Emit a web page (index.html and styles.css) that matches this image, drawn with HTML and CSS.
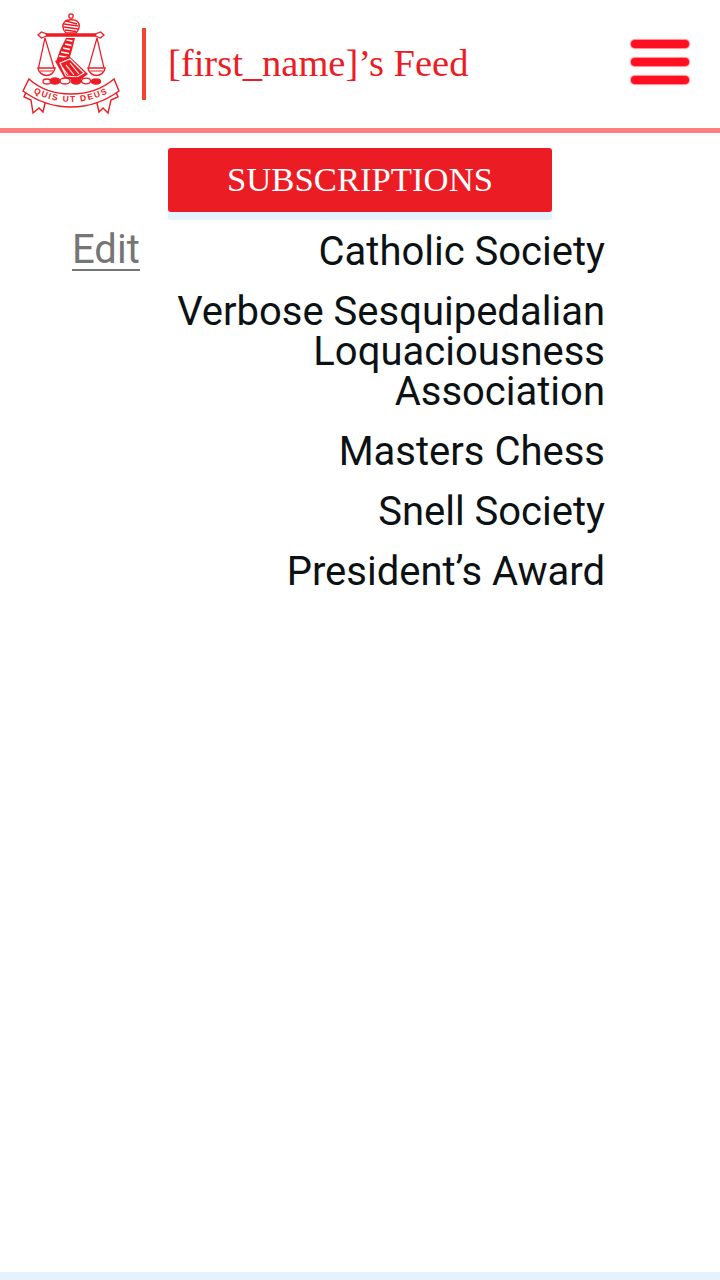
FILE: index.html
```html
<!DOCTYPE html>
<html lang="en">
<head>
<meta charset="utf-8">
<title>Feed</title>
<link rel="stylesheet" href="styles.css">
</head>
<body>
<div class="page">
  <header class="header">
    <svg class="logo" viewBox="22 13 99 102" width="99" height="102" aria-label="Crest">
      <g class="crest-line">
        <circle cx="71" cy="16" r="2.200" stroke-width="1.300"/>
        <path d="M66 33C62 29 62 24 65 21.500 67 19.500 75 19 77.500 21.500 80 24 80 29 76 33z" stroke-width="1.400"/>
        <path d="M64 24l14 2M63.500 27l15 2M66 21l11 3M65 30l11 1.500" stroke-width="1.300"/>
        <path d="M43 35H99" stroke-width="3.400"/>
        <path d="M38 35l3.500-3 4 1.500 1.500 1.500-1.500 1.500-4 1.500zM104 35l-3.500-3-4 1.500-1.500 1.500 1.500 1.500 4 1.500z" stroke-width="1.300"/>
        <path d="M45 38L38.500 68M45 38L54 68M97 38L88.500 68M97 38L104 68" stroke-width="1.200"/>
      </g>
      <g class="crest-line">
        <path d="M38 68H55C54.500 73 50 75.500 46.500 75.500S38.500 73 38 68zM88 68H105C104.500 73 100 75.500 96.500 75.500S88.500 73 88 68z" stroke-width="1.500"/>
        <path d="M40 71H53M90 71H103" stroke-width="1"/>
      </g>
      <path class="crest-fill" d="M66 38H75L72 50 69 60 56 62 60 50z"/>
      <path class="crest-white" d="M66.500 40l6 1M65 44l6.500 1.500M63 48l7 1.500M61 52l8 1.500M59 56l9 1.500" stroke-width="1.300"/>
      <path class="crest-fill" d="M55 61L69 56 88 74 80 80 65 79z"/>
      <path class="crest-white" d="M60 63L70 59 84 73 77 77 66 76zM70 63l9 11M66 65l8 10M62 67l6 8" stroke-width="1.100"/>
      <g class="coins">
        <ellipse cx="47" cy="81.500" rx="4" ry="2.500"/>
        <ellipse class="coin-solid" cx="55" cy="81" rx="5" ry="3"/>
        <ellipse cx="65" cy="81" rx="5" ry="3"/>
        <ellipse class="coin-solid" cx="76" cy="81" rx="5" ry="3"/>
        <ellipse cx="86" cy="81" rx="4.500" ry="2.800"/>
        <ellipse class="coin-solid" cx="96" cy="81.500" rx="4.500" ry="2.500"/>
      </g>
      <g class="ribbon">
        <path d="M29 85L24 97 31 100 33 113 39 108 43 112 46 99z"/>
        <path d="M113 85L118 97 111 100 108 113 103 108 99 112 96 99z"/>
        <path d="M29 79C41 90 55 94 71 94S101 90 114 79L119 91C104 102 86 107 71 107S38 102 23 91z"/>
      </g>
      <path id="motto-path" class="motto-path" d="M32 92Q71 112 110 92"/>
      <text class="motto"><textPath href="#motto-path" startOffset="50%" text-anchor="middle">QUIS UT DEUS</textPath></text>
    </svg>
    <span class="divider"></span>
    <h1 class="title">[first_name]’s Feed</h1>
    <div class="menu" aria-label="Menu"><i></i><i></i><i></i></div>
  </header>
  <main class="main">
    <h2 class="banner">SUBSCRIPTIONS</h2>
    <div class="content">
      <a class="edit" href="#">Edit</a>
      <ul class="subs">
        <li>Catholic Society</li>
        <li>Verbose Sesquipedalian Loquaciousness Association</li>
        <li>Masters Chess</li>
        <li>Snell Society</li>
        <li>President’s Award</li>
      </ul>
    </div>
  </main>
  <footer class="footer"></footer>
</div>
</body>
</html>
```
FILE: styles.css
```css
* { box-sizing: border-box; }
html, body { margin: 0; padding: 0; background: #fff; }
.page { display: flex; flex-direction: column; height: 1280px; font-family: Roboto, sans-serif; }
.header { display: flex; align-items: center; height: 133px; padding: 0 31px 0 22px; border-bottom: 5px solid #ff8080; }
.logo { flex: none; display: block; }
.crest-line { fill: #fff; stroke: #ed1c24; }
.crest-fill { fill: #ed1c24; }
.crest-white { fill: none; stroke: #fff; }
.coins ellipse { fill: #fff; stroke: #ed1c24; stroke-width: 1.300; }
.coins .coin-solid { fill: #ed1c24; }
.ribbon path { fill: #fff; stroke: #ed1c24; stroke-width: 1.400; }
.motto-path { fill: none; }
.motto { font: 700 8.500px "Liberation Sans", sans-serif; letter-spacing: 1.500px; fill: #ed1c24; }
.divider { flex: none; width: 4px; height: 72px; margin-left: 21px; background: #f44336; }
.title { flex: 1; margin: 0 0 2px 22px; font: 400 38.500px/1 "Liberation Serif", serif; color: #ed1c24; }
.menu { display: flex; flex-direction: column; gap: 10px; width: 58px; margin-bottom: 4px; }
.menu i { display: block; height: 8px; border-radius: 4px; background: #ff0f22; box-shadow: 0 0 1px 1px rgba(255, 15, 34, 0.5); }
.main { flex: 1; display: flex; flex-direction: column; align-items: center; padding-top: 15px; }
.banner { width: 384px; height: 64px; margin: 0; border-radius: 3px; background: #ec1c24; box-shadow: 0 8px 0 #e3f2fd; color: #fff; font: 400 34.700px/63px "Liberation Serif", serif; text-align: center; }
.content { align-self: stretch; display: flex; justify-content: space-between; padding: 16px 115px 0 72px; }
.edit { flex: none; height: 43px; padding-top: 2px; font-size: 40px; line-height: 40px; color: #757575; text-decoration: none; border-bottom: 2px solid #757575; }
.subs { list-style: none; width: 440px; margin: 4px 0 0; padding: 0; text-align: right; color: #0c1214; font-size: 40px; line-height: 40px; }
.subs li { margin-bottom: 20px; }
.footer { flex: none; height: 8px; background: #e3f2fd; }
```
